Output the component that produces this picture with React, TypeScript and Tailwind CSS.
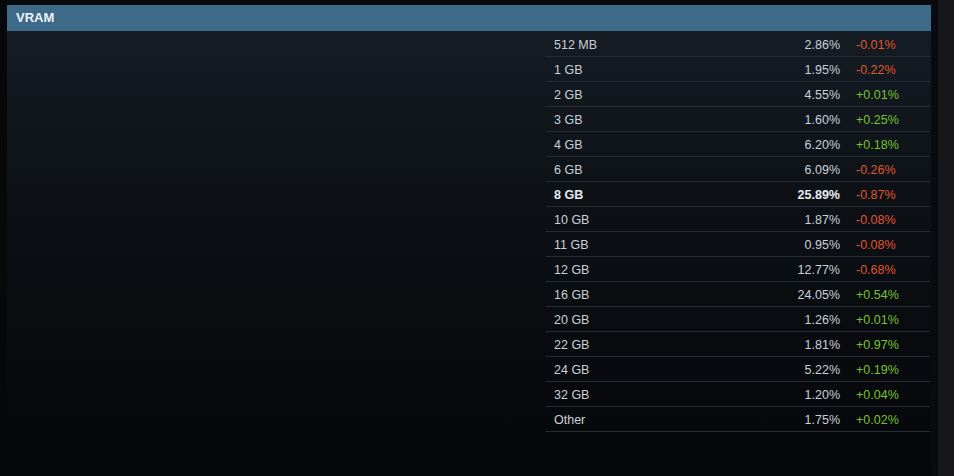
const rows = [
  { label: '512 MB', pct: '2.86%', change: '-0.01%' },
  { label: '1 GB', pct: '1.95%', change: '-0.22%' },
  { label: '2 GB', pct: '4.55%', change: '+0.01%' },
  { label: '3 GB', pct: '1.60%', change: '+0.25%' },
  { label: '4 GB', pct: '6.20%', change: '+0.18%' },
  { label: '6 GB', pct: '6.09%', change: '-0.26%' },
  { label: '8 GB', pct: '25.89%', change: '-0.87%', bold: true },
  { label: '10 GB', pct: '1.87%', change: '-0.08%' },
  { label: '11 GB', pct: '0.95%', change: '-0.08%' },
  { label: '12 GB', pct: '12.77%', change: '-0.68%' },
  { label: '16 GB', pct: '24.05%', change: '+0.54%' },
  { label: '20 GB', pct: '1.26%', change: '+0.01%' },
  { label: '22 GB', pct: '1.81%', change: '+0.97%' },
  { label: '24 GB', pct: '5.22%', change: '+0.19%' },
  { label: '32 GB', pct: '1.20%', change: '+0.04%' },
  { label: 'Other', pct: '1.75%', change: '+0.02%' },
];

export default function App() {
  return (
    <div
      className="flex h-[476px] w-[954px] overflow-hidden bg-[#08090b] text-[12.5px]"
      style={{ fontFamily: '"Liberation Sans", Arial, sans-serif' }}
    >
      <div className="w-[7px] shrink-0 bg-[#07080a]" />
      <div className="flex w-[924px] shrink-0 flex-col pt-[5px]">
        <div className="flex h-[26px] items-center bg-[#3d6a88] pl-[9px] text-[13px] font-bold text-[#eef4f8]">
          VRAM
        </div>
        <div className="flex flex-1 bg-gradient-to-b from-[#151c24] via-[#0b0e12] to-[#060709]">
          <div className="flex-1" />
          <div className="mt-px w-[384px] shrink-0 self-start">
            {rows.map((r) => (
              <div
                key={r.label}
                className={`flex h-[25px] border-b border-[#262c33] pt-[6px] leading-[15px] ${
                  r.bold ? 'font-bold text-[#e6ecf1]' : 'text-[#c8d1d9]'
                }`}
              >
                <div className="flex-1 pl-2">{r.label}</div>
                <div className="w-[100px] text-right">{r.pct}</div>
                <div
                  className={`w-[90px] pl-4 font-normal ${
                    r.change.startsWith('-') ? 'text-[#e0562d]' : 'text-[#79c22e]'
                  }`}
                >
                  {r.change}
                </div>
              </div>
            ))}
          </div>
          <div className="w-px shrink-0" />
        </div>
      </div>
      <div className="w-[7px] shrink-0 bg-[#0a0b0e]" />
      <div className="flex-1 bg-[#15171b]" />
    </div>
  );
}
